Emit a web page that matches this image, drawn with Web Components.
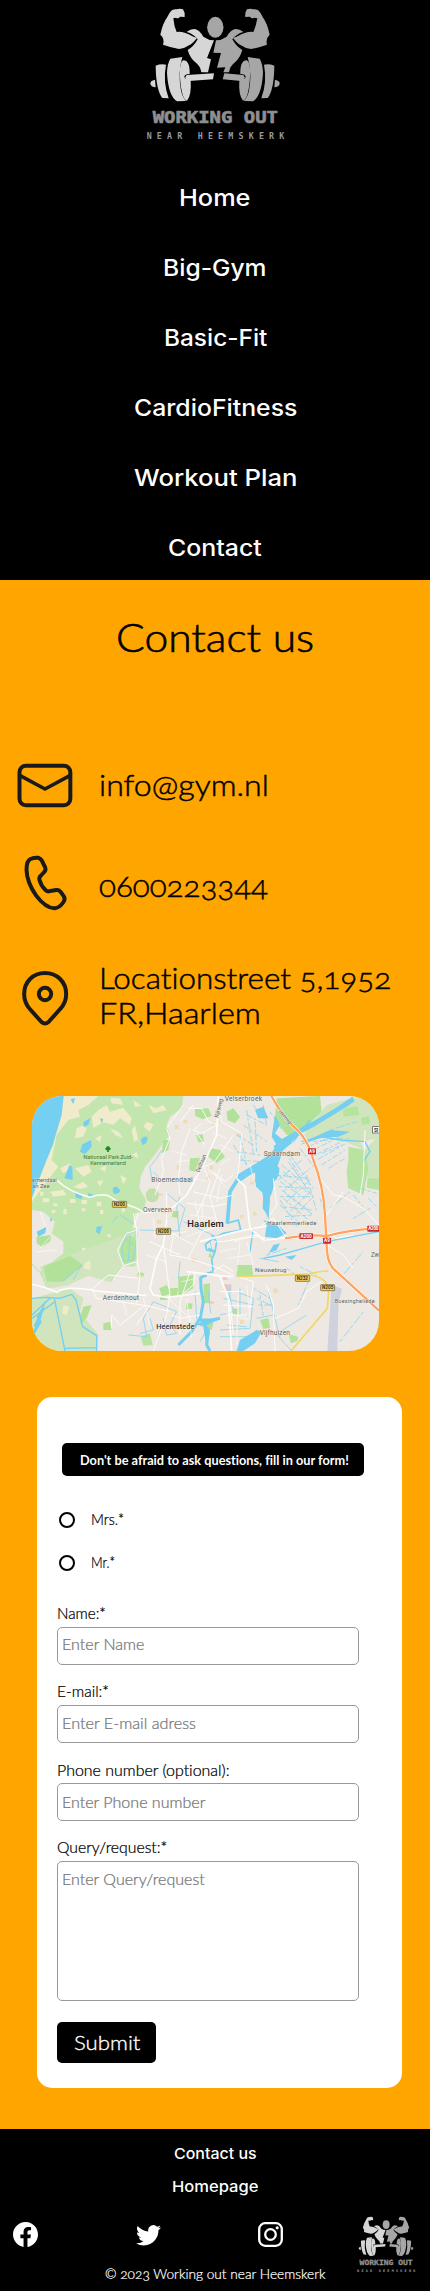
<!DOCTYPE html>
<html lang="en">
<head>
<meta charset="utf-8">
<title>Contact us</title>
<style>
body{margin:0;background:#000;font-family:Lato,"Open Sans",sans-serif;font-weight:300;color:#000;--thicken:.016em}
</style>
</head>
<body>
<gym-header></gym-header>
<gym-contact></gym-contact>
<gym-footer></gym-footer>
<script>
const define = (name, html) => customElements.define(name, class extends HTMLElement {
  connectedCallback() {
    if (!this.shadowRoot) this.attachShadow({mode: 'open'}).innerHTML = html;
  }
});

define('gym-logo', `
<style>:host{display:block}svg{display:block;width:100%;height:100%}text{font-family:"DejaVu Sans Mono",monospace;font-weight:700}</style>
<svg viewBox="0 0 510 450">
 <g id="l" fill="#d6d6d6">
  <path d="M119 38 Q126 27 139 28 Q150 25 159 28 Q166 38 164 51 L150 50 Q145 58 137 53 L130 55 Q132 79 140 96 Q160 93 190 110 L201 113 Q191 129 173 138 Q161 147 147 147 Q124 143 99 134 Q105 116 91 104 Q98 70 112 51 Z"/>
  <path d="M170 96 Q180 87 195 87 Q209 91 220 110 Q236 121 252 121 L231 174 L243 178 L234 217 L214 217 Q211 198 196 187 Q180 174 173 150 Q191 140 203 118 Q190 101 170 96Z"/>
  <path d="M77 197 Q92 191 108 194 Q98 245 116 295 L97 294 Q78 270 77 197Z"/>
  <path d="M121 176 L157 171 Q143 218 153 272 Q158 292 168 303 L141 304 Q115 288 111 219 Q112 190 121 176Z"/>
  <path d="M160 181 Q180 181 179 222 Q165 221 163 230 Q164 240 182 241 Q185 287 171 302 Q157 300 151 245 Q146 187 160 181Z"/>
  <path d="M170 225 L252 220 L249 238 L176 243 Q165 241 166 232Z"/>
  <path d="M75 239 Q60 242 61 251 Q63 261 77 262Z"/>
 </g>
 <g fill="#a6a6a6">
  <ellipse cx="256" cy="82" rx="24.5" ry="31.5"/>
  <path d="M391 38 Q384 27 371 28 Q360 25 351 28 Q344 38 346 51 L360 50 Q365 58 373 53 L382 55 Q378 79 370 96 Q350 93 320 110 L309 113 Q319 129 337 138 Q349 147 363 147 Q386 143 411 134 Q406 116 419 104 Q412 70 398 51 Z"/>
  <path d="M340 96 Q330 87 315 87 Q301 91 290 110 Q274 121 258 121 L250 158 L273 159 L261 203 L286 202 L280 217 L297 217 Q300 198 315 187 Q330 174 337 150 Q319 140 307 118 Q320 101 340 96Z"/>
  <path d="M433 197 Q418 191 402 194 Q412 245 394 295 L413 294 Q432 270 433 197Z"/>
  <path d="M389 176 L353 171 Q367 218 357 272 Q352 292 342 303 L369 304 Q395 288 399 219 Q398 190 389 176Z"/>
  <path d="M350 181 Q330 181 331 222 Q345 221 347 230 Q346 240 328 241 Q325 287 339 302 Q353 300 359 245 Q364 187 350 181Z"/>
  <path d="M340 225 L283 220 L278 238 L334 243 Q345 241 344 232Z"/>
  <path d="M435 239 Q450 242 449 251 Q447 261 433 262Z"/>
 </g>
 <text x="68" y="370" font-size="50" textLength="376" lengthAdjust="spacingAndGlyphs" fill="#8f8f8f" stroke="#8f8f8f" stroke-width="2">WORKING OUT</text>
 <text x="50" y="417" font-size="25" textLength="413" fill="#999">NEAR HEEMSKERK</text>
</svg>`);

define('gym-header', `
<style>
:host{display:block;height:580px;background:#000;color:#fff;overflow:hidden;--thicken:0}
gym-logo{width:170px;height:150px;margin:0 auto 12.5px}
nav{display:flex;flex-direction:column;align-items:center;font:500 22.5px/70px Inter,sans-serif}
fit-text{height:70px}
</style>
<gym-logo></gym-logo>
<nav>
<fit-text w="72">Home</fit-text><fit-text w="104">Big-Gym</fit-text><fit-text w="103">Basic-Fit</fit-text>
<fit-text w="163">CardioFitness</fit-text><fit-text w="163">Workout Plan</fit-text><fit-text w="94">Contact</fit-text>
</nav>`);

define('contact-line', `
<style>
:host{display:flex;gap:21.5px;padding-left:11.5px;font-size:30px;line-height:35px}
::slotted(svg){width:66px;height:66px;flex:none;fill:none;stroke:#1a1a1a;stroke-width:12;stroke-linejoin:round;margin-top:var(--icon,0)}
div{padding-top:var(--text,0)}
</style><slot name="icon"></slot><div><slot></slot></div>`);

define('region-map', `
<style>
:host{display:block;width:347px;height:255px;border-radius:30px;overflow:hidden}
svg{display:block;width:100%;height:100%}
text{font-family:Roboto,"Open Sans",sans-serif;font-weight:400}
.mid{font-weight:500}
.road text{font-weight:700}
</style>
<svg viewBox="36 33 1041 765" preserveAspectRatio="none" fill="none">
 <rect x="36" y="33" width="1041" height="765" fill="#ede8e1"/>
 <path fill="#c3e6ad" d="M128 33H490L485 70L450 95L440 120L450 150L425 180L400 215L375 245L362 275L358 310L378 345L372 378L345 385L340 420L352 440L352 520L345 545L310 543L275 590L200 570L145 600L80 610L60 565L36 540V340Z"/>
 <path fill="#ede8e1" d="M36 375L70 380L105 410L95 445L130 470L130 505L60 560L36 535Z"/>
 <path fill="#d0e5bd" d="M36 640L150 610L190 640L180 680L235 750L230 798H36ZM60 545L150 510L300 455L340 440L350 520L310 545L270 592L205 572L145 600L80 612Z"/>
 <path fill="#b2e29a" d="M70 545L150 512L190 540L130 590L80 590Z"/>
 <path fill="#efebcb" d="M128 33H235L205 60L175 75L180 95L145 105L110 150L95 225L115 245L80 290L36 350V300L100 180Z"/>
 <path fill="#75cff0" d="M36 33H131L125 90L98 180L60 275L36 338Z"/>
 <g fill="#efebcb">
  <path d="M235 75L260 60L270 80L310 68L335 100L330 120L300 100L280 120L250 112L220 130L215 95ZM270 38L300 40L310 60L275 55ZM340 45L365 62L345 66ZM385 60L410 70L430 60L440 75L400 85ZM380 110L400 118L390 140L370 125ZM345 120L355 165L342 170L335 135ZM170 130L185 122L200 130L190 155L165 160ZM225 160L245 150L240 172ZM270 130L295 140L310 160L285 150ZM165 250L205 240L215 260L190 275ZM120 250L150 235L155 250L130 265ZM240 250L260 240L255 262ZM160 305L190 290L205 305L180 312ZM230 290L250 285L242 305ZM90 320L130 315L140 330L100 335ZM300 270L320 280L310 298ZM335 210L350 200L355 220ZM195 535L210 525L212 555L190 550ZM130 660L148 665L140 690L127 685Z"/>
  <path d="M68 340h20v12h-20zM100 355h12v9h-12zM150 342h16v12h-16zM185 345h16v12h-16zM230 350h14v14h-14zM95 375h11v8h-11zM130 372h10v16h-10zM185 370h11v9h-11zM240 375h10v12h-10zM60 320h10v12h-10zM185 488h12v8h-12zM262 448h10v8h-10zM305 370h10v10h-10z"/>
 </g>
 <g fill="#75cff0">
  <path d="M190 112L212 98L205 120L192 125ZM187 178L213 165L215 185L195 208L180 200ZM362 165Q372 148 383 158Q383 175 368 180ZM278 310Q290 297 301 318Q292 332 280 325ZM230 425L247 423L238 448L228 440ZM148 240L157 245L158 285L133 280ZM165 322L188 330L185 342L168 338ZM205 325L218 328L216 338L204 337ZM50 440L80 425L75 445L55 455ZM90 400L98 402L92 412ZM152 42L165 40L160 58ZM240 100L250 102L245 115Z"/>
 </g>
 <g fill="#b2e29a">
  <path d="M525 72L565 70L575 92L548 103L525 92ZM430 165L450 165L445 195L425 205ZM510 220L540 218L525 260L508 255ZM570 190L600 195L615 215L590 235L565 215ZM528 150L548 148L552 170L535 172ZM620 80L640 70L660 95L645 115L622 105ZM50 455L95 450L90 470L65 485L50 475ZM190 665L215 660L200 700L182 718L182 690ZM475 575L520 570L520 610L475 635ZM418 610L440 600L455 625L425 635ZM450 610L475 608L470 635L450 635ZM550 598L570 595L570 655L553 655ZM460 378L475 378L475 400L455 395ZM500 655L518 655L515 672L498 672ZM270 710L275 735L250 735L250 715ZM355 560L372 565L370 575L352 570ZM650 540L695 540L700 575L650 575ZM720 705L745 700L750 728L730 732ZM807 748L835 755L832 768L812 775ZM560 700L580 715L575 735L562 730ZM640 670L655 672L652 692L638 688ZM570 500L578 520L565 515ZM420 635h22v10h-22z"/>
  <path d="M770 40L900 33L905 80L880 105L835 150L800 150L765 100Z"/>
 </g>
 <path fill="#d0e5bd" d="M920 60L1010 36L1077 60V160L1020 170L1035 195L985 175L930 150L845 165L860 135ZM1035 195L1077 150V285L1040 275Z"/>
 <path fill="#b2e29a" d="M970 72L1012 64L1018 90L970 95ZM1023 98L1047 94L1050 115L1025 120ZM985 185L1035 195L1045 250L1030 330L985 310L980 260L985 225ZM1043 278L1077 282V315L1040 308ZM362 755L390 745L398 780L370 782ZM305 470L325 450L345 460L350 520L315 540L298 505Z" opacity=".9"/>
 <ellipse cx="397" cy="331" rx="20" ry="21" fill="#c3dfad"/>
 <g fill="#efd7ad" opacity=".75">
  <path d="M490 105h12v10h-12zM570 240h9v14h-9zM415 325h12v8h-12zM430 375h15v10h-15zM350 570h14v8h-14zM410 405h14v12h-14zM700 380h9v12h-9zM560 272h10v10h-10zM575 110h10v12h-10zM650 145h12v10h-12zM470 240h10v14h-10zM660 390h10v10h-10zM690 290h12v9h-12zM660 705h12v12h-12zM760 610h12v14h-12zM515 520h14v10h-14zM465 120h10v12h-10zM770 745h14v10h-14z"/>
  <path fill="#edc4c1" d="M612 598h22v20h-22zM568 648h14v8h-14zM608 575h14v10h-14z"/>
 </g>
 <path fill="#cfd1df" d="M935 600L966 612L955 660L952 798H922Z"/>
 <g stroke="#8cd5f0" stroke-width="2.500">
  <path stroke-dasharray="18 5 9 7" d="M870 200l90-45M875 215l110-55M895 222l80-45M865 185l70-30M905 240l70-45M925 250l50-30M785 240l60 50M790 260l70 60M780 290l75 50M785 315l80 60M800 330l80 60M810 210l70 100M790 340l75 65M805 230l50 70M780 345l50 80M840 190l45 60M860 270l30 110M795 200l45 70M820 250l60 90M775 270l55 45M780 360l60 55M905 205l60-25M1045 340l30 30M1000 330l30 35M1020 310l50 15M640 180l40 60M650 150l50 30M680 90l60 30M670 120l70 50M700 60l30 40M650 200l70 10M660 225l60 5M680 75l20 130M730 60l10 60M705 110l5 90M660 150l20 90"/>
  <path stroke-dasharray="12 6 28 5" d="M770 270l90 10M775 305l95 5M780 335l90 0M790 365l85 10M795 395l80-5M775 285l70-60M790 320l80-70M800 350l75-70M810 380l60-60M830 385l45-45M700 610l50 30M710 640l40 20M715 660l50 0M720 630l10 65M865 590l-30 70M960 580l70-80M1000 400l50-30M930 370l60-50M900 340l20 60M960 770l70-90M840 545l50 25M800 550l40 30M740 510l60-20M750 80l40 60M930 135l80-25M880 170l85-10"/>
  <path d="M345 420L320 403L300 390M275 415L295 390M352 436L320 447L305 490L310 530L340 525L352 445M330 450L325 525M315 460L340 480M160 585L185 540L130 588M325 750L380 755L370 700L400 650L470 680L450 720L470 745L440 750L430 700M390 700L400 735L360 745M525 620L530 700L560 735L540 770M565 620L572 685M360 435L475 438L495 370L440 325M480 330L470 370L480 460M590 455L490 410M745 620L770 720L780 760L815 798M620 600L640 680L600 690M650 620L700 640L690 730L600 735M630 600V660M660 610V690M610 640L700 660M620 720L680 725M600 755L700 755M760 690L710 700M720 520L775 530M395 280L390 245L410 220L425 195M400 260L415 275M570 470L580 510M480 530L475 580M860 690L780 740"/>
 </g>
 <g stroke="#75cff0" stroke-linejoin="round">
  <path stroke-width="4" d="M36 640L80 637L120 640L155 628L168 645L188 725L230 752V798M103 640L135 798M36 700L105 650M45 740L75 650M36 760L70 670M36 690L90 640M135 790L230 788"/>
  <path stroke-width="9" d="M70 670L55 695L60 710L40 745M62 690L45 725"/>
  <path stroke-width="5" d="M620 415L655 405L662 435L610 445L580 460L556 478L560 495L585 500L590 470L575 450M560 565L580 560L575 525L585 500L565 490"/>
  <path stroke-width="9" d="M560 570L542 578L543 610L550 650L540 705L575 705L600 700M540 700L565 735L560 780L570 798M540 700L515 740L475 780"/>
  <path stroke-width="4" d="M730 520L780 510L850 490L920 470L1077 440M870 105L850 130L820 170M700 430L690 500M845 170L900 155L960 165L1035 170L1050 200L1030 230"/>
  <path stroke-width="11" d="M622 415L630 320L655 280L705 250L735 225L790 185L850 130L920 95L1000 40"/>
  <path stroke-width="14" d="M765 190L785 170L830 145L885 115L975 60L1000 43"/>
 </g>
 <path fill="#75cff0" d="M765 90L780 120L765 145L790 165L820 170L790 195L770 250L745 300L750 345L745 405L735 370L725 310L705 290L710 260L690 270L660 290L650 270L700 240L750 210L770 180L755 155ZM730 405L780 425L800 445L770 460L735 455L740 420ZM735 525L760 480L780 475L770 495L745 505ZM795 515L830 510L815 525ZM660 765L710 735L725 740L705 775L670 798H650ZM705 75L730 65L745 100L715 100ZM560 705L530 718L550 725L600 702ZM540 700L570 740L560 790L550 725Z"/>
 <path fill="#75cff0" d="M705 262Q715 240 760 235L778 248Q780 275 762 290Q760 320 748 340L745 395L728 370L730 325L708 305ZM875 160L930 135L990 140L955 155L900 160L840 180Z"/>
 <g stroke="#fff" opacity=".9">
  <path stroke-width="3" d="M490 60L440 130L450 160L425 220L430 260L405 330M510 130L485 200L475 280L480 335M505 70H545L565 110L595 120M595 65L605 110L665 145L655 260L650 280M545 115L520 135L545 145L590 120M555 180L530 145M550 245L570 290L560 325L530 390M565 255L615 290L640 270M600 250L570 335L595 425L545 440L505 520M520 320L600 340L640 330M500 355L580 365L620 355M440 320L440 410M430 430L520 480M460 450L450 510L505 520L585 545L640 570M390 470L480 510M340 385L350 435L352 530L310 542L293 495L320 445L352 435M355 385L340 430M352 530L360 570L350 655M280 585L310 543M220 610L265 570L355 580M215 610L230 640L380 662L450 680M275 690L300 720L350 680L375 660M275 690L275 730M455 690L480 700L540 690M390 660L350 720M430 480L450 630L440 690L400 798M510 560L480 650L480 750M525 560L520 600L490 625M640 470L700 450L735 460M585 470L610 470L660 460L720 455M640 560L610 540L580 560M600 580L630 650L640 750M655 575L700 590L690 670M610 660L700 665M620 690L680 690M600 620H670M740 600L760 660L765 798M765 700L835 670L860 620L905 590M725 420L760 400L800 460M760 280L770 360L750 390M900 280L940 330L970 335L1030 370L1077 420M920 440L950 460L1000 450M905 470L970 510L1000 550M935 555L1000 600L1077 680M920 390L970 320M1035 135L1030 270L1020 330M640 150L580 235L550 245M480 110L520 60M755 33L770 60L800 110"/>
  <path stroke-width="5" d="M36 598Q75 605 110 622Q140 600 230 618L380 632M110 285Q145 320 210 337Q240 325 265 332L285 345L350 370L375 383L450 375L500 330L550 240L590 150L595 33M650 280L675 305L690 430L735 468M540 470L650 440L740 423M740 465L800 458M440 405L430 480L410 520L390 610L400 630L440 637L540 625M580 572L640 575M600 575L625 640L635 798M500 560L600 572"/>
  <path stroke-width="2" d="M460 200L500 210M470 230L510 225M580 145L620 160M600 180L640 200M580 260L620 310M605 270L590 350M630 220L600 240M525 350L540 420M550 350L545 410M510 390L590 400M500 455L540 440M520 280L560 290M485 590L530 580M620 520L690 510M600 500L650 490M660 470L650 560M680 470L700 540M430 450L500 440M400 400L405 460M380 510L440 530M370 640L390 720M310 650L320 690M60 380L80 430M95 450L60 490M50 500L110 495M445 640L520 710M500 640L515 760M655 610L650 780M680 600L690 700M610 680L690 705M690 240L700 280"/>
 </g>
 <path stroke="#f3d663" stroke-width="5" d="M653 574L740 572L865 567Q900 558 925 558M870 570Q925 578 926 620L922 670L813 798"/>
 <g stroke="#fff" stroke-width="10"><path d="M754 33Q790 100 840 143Q870 180 880 225Q910 300 915 390L921 500Q926 545 950 560L1077 677M795 460Q870 447 920 453Q980 435 1077 430"/></g>
 <g stroke="#ffa35f" stroke-width="7"><path d="M754 33Q790 100 840 143Q870 180 880 225Q910 300 915 390L921 500Q926 545 950 560L1077 677M795 460Q870 447 920 453Q980 435 1077 430"/></g>
 <path fill="#218821" d="M264 184a6 6 0 0 1 6 4a4 4 0 1 1-4 7l1 6h-6l1-6a4 4 0 1 1-4-7a6 6 0 0 1 6-4Z"/>
 <g fill="#5a5f5a" font-size="20" stroke="#f4f0e8" stroke-width="2" paint-order="stroke">
  <g fill="#437c43" stroke="#c3e6ad" font-size="18"><text x="190" y="222" textLength="148">Nationaal Park Zuid-</text><text x="211" y="241" textLength="107">Kennemerland</text></g>
  <text x="36" y="290" font-size="18" textLength="74">emendaal</text><text x="36" y="309" font-size="18" textLength="53">an Zee</text>
  <text x="394" y="292" textLength="124">Bloemendaal</text><text x="369" y="380" textLength="86">Overveen</text>
  <text x="248" y="645" textLength="109">Aerdenhout</text><text x="614" y="48" textLength="112">Velserbroek</text>
  <text x="731" y="212" textLength="109">Spaarndam</text><text x="742" y="420" font-size="18" textLength="147">Haarlemmerliede</text>
  <text x="705" y="561" font-size="18" textLength="94">Nieuwebrug</text><text x="719" y="750" textLength="91">Vijfhuizen</text>
  <text x="944" y="655" font-size="17" textLength="120">Boesingheliede</text><text x="1053" y="515" font-size="19" textLength="24" lengthAdjust="spacingAndGlyphs">Zw</text>
  <text class="mid" fill="#222" x="502" y="425" font-size="28" textLength="109">Haarlem</text>
  <text class="mid" fill="#333" x="409" y="733" font-size="22" textLength="114">Heemstede</text>
  <text transform="translate(538 263) rotate(-68)" font-size="17" textLength="56">Delftlaan</text>
  <text transform="translate(595 99) rotate(-77)" font-size="17" textLength="58">Rijksweg</text>
  <text transform="translate(774 78) rotate(50)" font-size="16" textLength="52">Veerweg</text>
 </g>
 <g class="road" font-size="14" text-anchor="middle">
  <g fill="#f3d05c" stroke="#5e562e" stroke-width="2"><rect x="277" y="349" width="43" height="18" rx="2"/><rect x="409" y="430" width="43" height="18" rx="2"/><rect x="826" y="571" width="43" height="18" rx="2"/><rect x="902" y="599" width="42" height="18" rx="2"/></g>
  <g fill="#333"><text x="298" y="363">N200</text><text x="430" y="444">N208</text><text x="847" y="585">N232</text><text x="923" y="613">N205</text></g>
  <g fill="#c9282d"><rect x="864" y="190" width="24" height="18" rx="2"/><rect x="838" y="445" width="41" height="17" rx="2"/><rect x="909" y="458" width="24" height="18" rx="2"/><rect x="1042" y="422" width="41" height="18" rx="2"/></g>
  <g fill="#fff"><text x="876" y="204">A9</text><text x="858" y="459">A200</text><text x="921" y="472">A9</text><text x="1060" y="436" textLength="31">A200</text></g>
  <rect x="1058" y="125" width="30" height="19" fill="#fff" stroke="#444" stroke-width="2"/><text x="1069" y="140" fill="#333" textLength="14">S1</text>
 </g>
</svg>`);

define('form-field', `
<style>
:host{display:block;height:var(--step,79px)}
.label{height:20px;line-height:20px;color:#000}
.box{box-sizing:border-box;width:302px;height:var(--box,38px);border:1px solid #999;border-radius:5px;margin-top:var(--gap,3px);padding:var(--pad,7px) 0 0 4px;line-height:20px;color:#757575}
</style>
<div class="label"><slot name="label"></slot></div><div class="box"><slot></slot></div>`);

define('radio-option', `
<style>
:host{display:flex;align-items:center;height:43px;padding-left:2px;gap:16px;color:#000}
i{box-sizing:border-box;width:16px;height:16px;border:2px solid #000;border-radius:50%}
::slotted(*){margin-top:-2px}
</style><i></i><slot></slot>`);

define('question-form', `
<style>
:host{display:block;box-sizing:border-box;width:365px;height:691px;background:#fff;border-radius:15px;padding:46px 0 0 20px;font-size:15.5px}
.banner{box-sizing:border-box;width:302px;height:33px;margin:0 0 22px 5px;border-radius:5px;background:#000;color:#fff;font:700 12.5px/33px Lato,sans-serif;padding:1px 0 0 18px;--thicken:0}
.radios{margin-bottom:19px}
button{display:block;width:99px;height:41px;border:0;border-radius:5px;background:#000;color:#fff;font:300 19.5px/41px Lato,sans-serif;margin-top:1px;padding:0 0 0 17px;text-align:left}
</style>
<div class="banner"><fit-text w="269">Don't be afraid to ask questions, fill in our form!</fit-text></div>
<div class="radios"><radio-option><fit-text w="33">Mrs.*</fit-text></radio-option><radio-option><fit-text w="24">Mr.*</fit-text></radio-option></div>
<form-field style="--step:78px;--gap:4px;--pad:6px"><fit-text slot="label" w="49">Name:*</fit-text><fit-text w="82">Enter Name</fit-text></form-field>
<form-field style="--step:79px;--gap:4px"><fit-text slot="label" w="52">E-mail:*</fit-text><fit-text w="134">Enter E-mail adress</fit-text></form-field>
<form-field style="--step:77px;--gap:3px;--pad:8px"><fit-text slot="label" w="173">Phone number (optional):</fit-text><fit-text w="143">Enter Phone number</fit-text></form-field>
<form-field style="--step:184px;--box:140px;--gap:4px"><fit-text slot="label" w="110">Query/request:*</fit-text><fit-text w="143">Enter Query/request</fit-text></form-field>
<button><fit-text w="66">Submit</fit-text></button>`);

define('gym-contact', `
<style>
:host{display:block;box-sizing:border-box;height:1549px;background:#ffa500;padding-top:33px}
h1{margin:0 0 91px;font-weight:300;font-size:40px;line-height:48px;text-align:center}
.lines{display:flex;flex-direction:column}
region-map{margin:64px 0 46px 32px}
question-form{margin-left:37px}
</style>
<h1><fit-text w="198">Contact us</fit-text></h1>
<div class="lines">
<contact-line style="height:98px;--text:15px"><svg slot="icon" viewBox="34.5 516 198 198"><rect x="57" y="557.5" width="152.500" height="118" rx="19"/><path d="M59 587L133.500 627L208 587" stroke-width="11"/></svg><fit-text w="170">info@gym.nl</fit-text></contact-line>
<contact-line style="height:110px;--text:18px"><svg slot="icon" viewBox="34.5 91 198 198"><path d="M90 118Q103 113 114 114.500Q121 117 124 123L134 143Q137 151 131 157L120 169Q115 174 117 181Q122 199 135 211Q139 216 145 215L167 211Q175 210 180 216L190 230Q195 238 189 247Q177 265 162 266Q135 265 107 228Q79 188 78 150Q78 124 90 118Z"/></svg><fit-text w="169">0600223344</fit-text></contact-line>
<contact-line style="height:72px;--icon:5px"><svg slot="icon" viewBox="34.5 436 198 198"><path d="M133.500 460C97 460 71 487 71 523Q71 549 88 568L123 607Q133.500 616 144 607L179 568Q197 549 197 523C197 487 170 460 133.500 460Z"/><circle cx="133.500" cy="523" r="18.500"/></svg><fit-text w="292">Locationstreet 5,1952</fit-text><br><fit-text w="162">FR,Haarlem</fit-text></contact-line>
</div>
<region-map></region-map>
<question-form></question-form>`);

define('gym-footer', `
<style>
:host{display:block;box-sizing:border-box;height:162px;background:#000;color:#fff;padding-top:8px;position:relative;overflow:hidden}
.links{display:flex;flex-direction:column;align-items:center;font:500 15px/33px Inter,sans-serif;--thicken:0}
.links fit-text{height:33px}
.social{display:flex;gap:97.500px;padding:19px 0 0 13px}
.social svg{width:25px;height:25px;fill:#fff}
p{margin:15px 0 0;text-align:center;font-size:13.5px;line-height:24px;color:#fff}
gym-logo{position:absolute;left:349.500px;top:84px;width:72px;height:63.500px}
</style>
<div class="links"><fit-text w="83">Contact us</fit-text><fit-text w="86">Homepage</fit-text></div>
<div class="social">
<svg viewBox="0 0 16 16"><path d="M16 8.049c0-4.446-3.582-8.050-8-8.050C3.580 0-.002 3.603-.002 8.050c0 4.017 2.926 7.347 6.750 7.951v-5.625h-2.030V8.050H6.750V6.275c0-2.017 1.195-3.131 3.022-3.131.876 0 1.791.157 1.791.157v1.980h-1.009c-.993 0-1.303.621-1.303 1.258v1.510h2.218l-.354 2.326H9.250V16c3.824-.604 6.750-3.934 6.750-7.951z"/></svg>
<svg viewBox="0 0 16 16"><path d="M5.026 15c6.038 0 9.341-5.003 9.341-9.334 0-.140 0-.282-.006-.422A6.685 6.685 0 0 0 16 3.542a6.658 6.658 0 0 1-1.889.518 3.301 3.301 0 0 0 1.447-1.817 6.533 6.533 0 0 1-2.087.793A3.286 3.286 0 0 0 7.875 6.030a9.325 9.325 0 0 1-6.767-3.429 3.289 3.289 0 0 0 1.018 4.382A3.323 3.323 0 0 1 .640 6.575v.045a3.288 3.288 0 0 0 2.632 3.218 3.203 3.203 0 0 1-.865.115 3.230 3.230 0 0 1-.614-.057 3.283 3.283 0 0 0 3.067 2.277A6.588 6.588 0 0 1 .780 13.580a6.320 6.320 0 0 1-.780-.045A9.344 9.344 0 0 0 5.026 15z"/></svg>
<svg viewBox="0 0 25 25"><rect x="1.200" y="1.200" width="22.600" height="22.600" rx="6" fill="none" stroke="#fff" stroke-width="2.300"/><circle cx="12.500" cy="12.500" r="5.300" fill="none" stroke="#fff" stroke-width="2.300"/><circle cx="19.200" cy="5.800" r="1.600"/></svg>
</div>
<p><fit-text w="221">© 2023 Working out near Heemskerk</fit-text></p>
<gym-logo></gym-logo>`);

/* One line of text, widened or narrowed so that it spans the width in "w". */
customElements.define('fit-text', class extends HTMLElement {
  connectedCallback() {
    if (this.shadowRoot) return;
    this.attachShadow({mode: 'open'}).innerHTML =
      '<style>:host{display:inline-block;text-align:left;white-space:nowrap;font-variant-numeric:oldstyle-nums;font-variant-ligatures:none;-webkit-text-stroke-width:var(--thicken,0)}span{display:inline-block;transform-origin:0 50%}</style><span><slot></slot></span>';
    const span = this.shadowRoot.querySelector('span');
    const w = this.getAttribute('w');
    span.style.transform = `scaleX(${w / span.offsetWidth})`;
    this.style.width = w + 'px';
  }
});
</script>
</body>
</html>
